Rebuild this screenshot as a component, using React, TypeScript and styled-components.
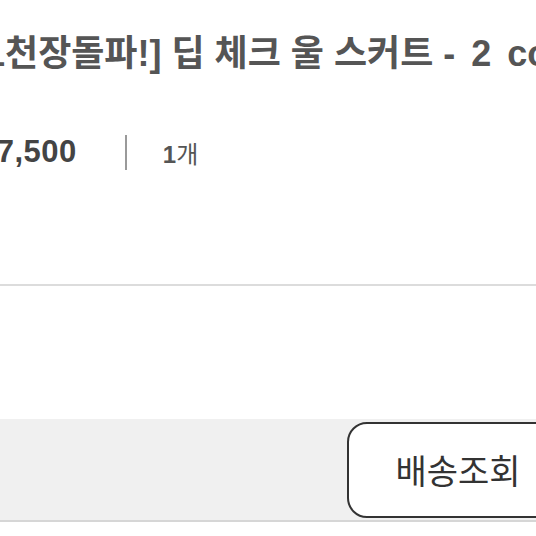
import { createGlobalStyle, styled } from 'styled-components'

const GlobalStyle = createGlobalStyle`
    html, body {
        margin: 0;
        padding: 0;
        background: #fff;
    }
    body {
        font-family: "Liberation Sans", "Noto Sans CJK KR", sans-serif;
    }
`

const Page = styled.div`
    width: 536px;
    height: 536px;
    overflow: hidden;
    background: #fff;
`

const Title = styled.h1`
    margin: 0;
    padding-top: 30px;
    margin-left: -27px;
    font-size: 36px;
    line-height: 48px;
    font-weight: 700;
    color: #555;
    white-space: nowrap;
`

const Suffix = styled.span`
    word-spacing: 6px;
`

const InfoRow = styled.div`
    display: flex;
    align-items: center;
    height: 36px;
    margin-top: 56px;
`

const Price = styled.span`
    margin-left: -21px;
    font-size: 31px;
    font-weight: 700;
    color: #444;
    letter-spacing: 0.5px;
`

const Divider = styled.span`
    width: 2px;
    height: 35px;
    margin: 0 36px 0 48px;
    background: #9a9a9a;
`

const Qty = styled.span`
    font-size: 24px;
    color: #555;

    b {
        font-weight: 700;
    }
`

const Line = styled.hr`
    margin: 114px 0 0;
    border: 0;
    height: 2px;
    background: #dcdcdc;
`

const ActionBar = styled.div`
    display: flex;
    align-items: center;
    margin-top: 133px;
    height: 101px;
    padding-left: 347px;
    background: #f0f0f0;
    border-bottom: 2px solid #d6d6d6;
`

const Button = styled.button`
    flex: none;
    width: 222px;
    height: 96px;
    border: 2.5px solid #333;
    border-radius: 20px;
    background: #fff;
    font-family: "Noto Sans CJK KR", "Liberation Sans", sans-serif;
    font-size: 34px;
    color: #333;
    padding: 0;
`

export default function App(){
    return (
        <Page>
            <GlobalStyle />
            <Title>[1천장돌파!] 딥 체크 울 스커트 <Suffix>- 2 color</Suffix></Title>
            <InfoRow>
                <Price>17,500</Price>
                <Divider />
                <Qty><b>1</b>개</Qty>
            </InfoRow>
            <Line />
            <ActionBar>
                <Button>배송조회</Button>
            </ActionBar>
        </Page>
    )
}
